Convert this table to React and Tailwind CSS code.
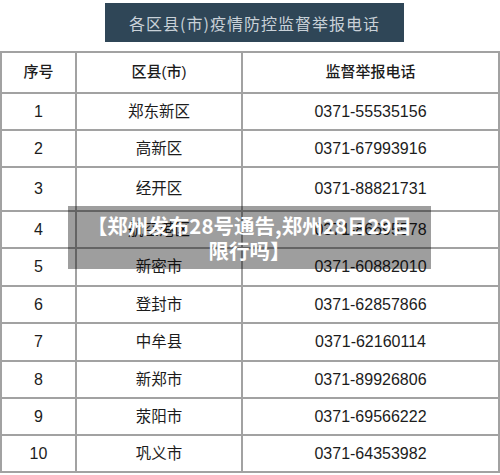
import React from "react";

const rows = [
  ["1", "郑东新区", "0371-55535156", "h-[37px]"],
  ["2", "高新区", "0371-67993916", "h-[37px]"],
  ["3", "经开区", "0371-88821731", "h-[44px]"],
  ["4", "航空港区", "0371-86695578", "h-[37px]"],
  ["5", "新密市", "0371-60882010", "h-[38px]"],
  ["6", "登封市", "0371-62857866", "h-[37px]"],
  ["7", "中牟县", "0371-62160114", "h-[38px]"],
  ["8", "新郑市", "0371-89926806", "h-[37px]"],
  ["9", "荥阳市", "0371-69566222", "h-[37px]"],
  ["10", "巩义市", "0371-64353982", "h-[37px]"],
];

export default function App() {
  return (
    <div className="relative w-[500px] h-[475px] bg-white overflow-hidden font-['Liberation_Sans','Noto_Sans_CJK_SC',sans-serif] text-[#1c1c1c]">
      <div className="pt-[3px]">
        <div className="ml-[105px] w-[299px] h-[39px] bg-[#2f4657] flex items-center justify-center text-[16px] tracking-[1px] text-[#c9d1d8] font-['Noto_Sans_CJK_SC',sans-serif]">
          各区县(市)疫情防控监督举报电话
        </div>
      </div>
      <div className="mt-[9px] border-t-2 border-l-2 border-r-2 border-[#a2a2a2]">
        <div className="grid grid-cols-[75px_166px_1fr] h-[41px] border-b-2 border-[#a2a2a2] text-[15px] font-medium">
          <div className="flex items-center justify-center border-r-2 border-[#a2a2a2]">序号</div>
          <div className="flex items-center justify-center border-r-2 border-[#a2a2a2]">区县(市)</div>
          <div className="flex items-center justify-center">监督举报电话</div>
        </div>
        {rows.map(([n, name, tel, h]) => (
          <div key={n} className={`grid grid-cols-[75px_166px_1fr] ${h} border-b-2 border-[#a2a2a2] text-[16px]`}>
            <div className="flex items-center justify-center border-r-2 border-[#a2a2a2]">{n}</div>
            <div className="flex items-center justify-center border-r-2 border-[#a2a2a2] text-[15.5px]">{name}</div>
            <div className="flex items-center justify-center">{tel}</div>
          </div>
        ))}
      </div>
      <div className="absolute left-[68px] top-[206px] w-[363px] h-[63px] bg-[rgba(0,0,0,0.38)] flex items-center justify-center px-[4px]">
        <p className="text-white font-bold text-[20.5px] leading-[25px] text-center whitespace-nowrap font-['Noto_Sans_CJK_SC',sans-serif]">
          【郑州发布28号通告,郑州28日29日
          <br />
          限行吗】
        </p>
      </div>
    </div>
  );
}
